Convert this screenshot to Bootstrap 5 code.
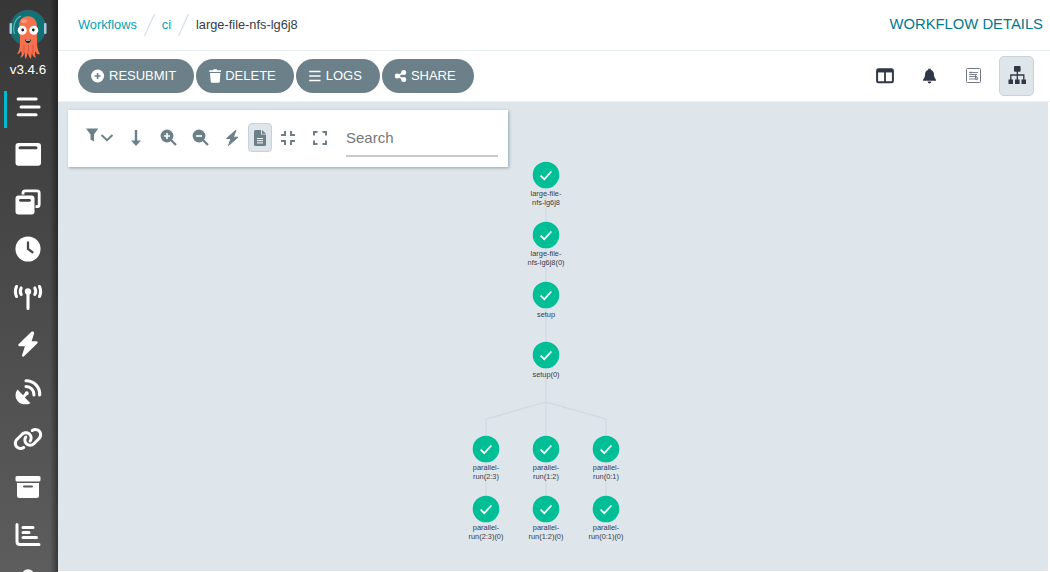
<!DOCTYPE html>
<html lang="en">
<head>
<meta charset="utf-8">
<meta name="viewport" content="width=device-width, initial-scale=1">
<title>Workflow Details</title>
<link href="https://cdn.jsdelivr.net/npm/bootstrap@5.3.0/dist/css/bootstrap.min.css" rel="stylesheet">
<style>
body{font-family:"Liberation Sans",Arial,sans-serif;font-size:13px;color:#363c4a;background:#fff}
a{text-decoration:none}
svg{display:block;flex:none}
.side{width:58px;background:linear-gradient(90deg,transparent 50px,rgba(0,0,0,.4)),linear-gradient(#373737,#5d5d5d);color:#fff}
.brand-box{height:83px;padding-top:9px}
.version{font-size:13.4px;line-height:16px;margin-top:2px;padding-right:2px}
.side-item{height:47.5px;flex:none;padding-right:2px}
.side-item.active::before{content:"";position:absolute;left:4px;top:8px;width:3px;height:37px;background:#00b9cd}
.crumbs{height:51px;border-bottom:1px solid #e9eff1;padding:0 7px 0 20px;font-size:12.8px}
.crumbs a{color:#00a2b3}
.page-title{font-size:14.8px;color:#007a8e;line-height:20px;margin-top:-3px}
.tools{height:51px;border-bottom:1px solid #edf2f4;padding:0 16px 0 20px}
.pill{height:34px;border-radius:17px;background:#6b8088;color:#fff;padding:0 18px 0 13px;font-size:13px}
.view-btn{width:35px;height:40px;border-radius:5px;border:1px solid transparent;color:#303746}
.view-btn.on{background:#dee6eb;border-color:#c6d3da}
.canvas{background:#dee6eb;margin:0 2px 1px 0}
.filter-box{left:10px;top:8px;width:440px;height:57px;background:#fff;box-shadow:1px 1px 3px #8fa4b1;padding:0 10px 0 17px}
.tool{flex:none;width:24px;height:29px;margin:-2px 8px 0 0;border:1px solid transparent;border-radius:4px;color:#6b8088}
.tool.wide{width:31px;margin-top:-5px}
.tool.tight{margin-right:4px}
.tool.on{background:#dee6eb;border-color:#c6d3da}
.search{width:152px;height:37px;margin:-1px 0 0 auto;border:0;border-bottom:2px solid #c9c9c9;border-radius:0;padding:0;font-size:15px;color:#777;background:none}
.search::placeholder{color:#777;opacity:1}
.graph{left:0;top:0}
.graph text{font-size:7.4px;text-anchor:middle;fill:#363c4a}
</style>
</head>
<body class="vh-100 overflow-hidden">
<svg width="0" height="0" class="position-absolute">
<symbol id="node" viewBox="-14 -14 28 28"><circle r="13.3" fill="#00be96"/><path d="M-5.4 .6-1.7 4.2 5.4-3.5" fill="none" stroke="#fff" stroke-width="1.7"/></symbol>
</svg>
<div class="d-flex h-100">
<nav class="side d-flex flex-column flex-shrink-0 overflow-hidden h-100">
  <div class="brand-box d-flex flex-column align-items-center flex-shrink-0">
    <svg width="38" height="51" viewBox="0 0 38 51" style="margin-right:2px"><circle cx="19" cy="19" r="17.7" fill="#0d7377" stroke="#39606c" stroke-width="1"/><rect x=".5" y="14" width="2.500" height="11" rx="1" fill="#a9c9dc"/><rect x="35" y="14" width="2.500" height="11" rx="1" fill="#a9c9dc"/><path d="M5.500 25C3 16 7 9 12 7" fill="none" stroke="#6fb5ad" stroke-width="1.200"/><path d="M10 17c0-13 18-13 18 0v14c0 7 1 11 3 14-3 1-4-1-5-3 0 3 0 5 1 7-3-1-4-3-4-6l-1 7c-2-2-3-4-3-7l-2 7c-2-2-1-5-1-7-1 3-2 5-5 6 2-3 2-5 1-7-1 2-2 3-4 3 3-4 3-9 3-15z" fill="#f5704c"/><path d="M15 36v8M19.500 36v7M24 36v8" stroke="#d9573c" stroke-width="1"/><ellipse cx="15" cy="12" rx="3" ry="2" fill="#fa987b"/><circle cx="13.200" cy="21.300" r="4.500" fill="#fff"/><circle cx="24.800" cy="21.300" r="4.500" fill="#fff"/><circle cx="13.700" cy="21" r="1.400" fill="#222"/><circle cx="24.300" cy="21" r="1.400" fill="#222"/><path d="M16 30.500q3 1.500 6 0-.6 3.500-3 3.500t-3-3.500" fill="#19222a"/><path d="M17 31.200q2 .7 4 0v.8h-4z" fill="#fff"/></svg>
    <div class="version">v3.4.6</div>
  </div>
  <a class="side-item active position-relative d-flex align-items-center justify-content-center"><svg width="32" height="32" viewBox="-16 -16 32 32" fill="none" stroke="#fff" stroke-width="3" stroke-linecap="round"><path d="M-10.500-8H7.500M-7.500 0h18M-10.500 7.800h18" transform="translate(.6)"/></svg></a>
  <a class="side-item d-flex align-items-center justify-content-center"><svg width="32" height="32" viewBox="-16 -16 32 32"><rect x="-12.500" y="-11" width="25.500" height="22.800" rx="3" fill="#fff"/><path d="M-8-6.300H8" stroke="#434343" stroke-width="3" stroke-linecap="round"/></svg></a>
  <a class="side-item d-flex align-items-center justify-content-center"><svg width="32" height="32" viewBox="-16 -16 32 32"><path d="M-5-7.500V-9q0-2.200 2.200-2.200H9q2.200 0 2.200 2.200V2.500q0 2.200-2.200 2.200H7.500" fill="none" stroke="#fff" stroke-width="2.800"/><rect x="-12.500" y="-6.500" width="19" height="19" rx="3" fill="#fff"/><path d="M-7.500-1.700H1.500" stroke="#454545" stroke-width="2.800" stroke-linecap="round"/></svg></a>
  <a class="side-item d-flex align-items-center justify-content-center"><svg width="32" height="32" viewBox="-16 -16 32 32"><circle r="12.600" fill="#fff"/><path d="M0-6.500V0L4.500 3.200" fill="none" stroke="#484848" stroke-width="2.300" stroke-linecap="round"/></svg></a>
  <a class="side-item d-flex align-items-center justify-content-center"><svg width="32" height="32" viewBox="-16 -16 32 32" fill="none" stroke="#fff" stroke-width="3.100" stroke-linecap="round"><path d="M0-5V11.500M-6.800-9q-2 3.500 0 6.500M6.800-9q2 3.500 0 6.500M-11.500-10.500q-2.200 5 0 10M11.500-10.500q2.200 5 0 10"/><circle cy="-5.500" r="1.700" fill="#fff"/></svg></a>
  <a class="side-item d-flex align-items-center justify-content-center"><svg width="32" height="32" viewBox="-16 -16 32 32"><path d="M4-11.200-8.600 1H-1.500L-4.800 11.500 8.600-1.500H2L5-11.200Z" fill="#fff" stroke="#fff" stroke-width="2.400" stroke-linejoin="round"/></svg></a>
  <a class="side-item d-flex align-items-center justify-content-center"><svg width="32" height="32" viewBox="-16 -16 32 32"><path d="M-10.500-2.500C-16 5-9 16 2.500 11.200L-3.200 5.500-1 3.300A2 2 0 1 0-3.200 1L-5 3.200Z" fill="#fff"/><path d="M-2-11.300A13.500 13.500 0 0 1 11.700 3M-2-5.500A8 8 0 0 1 6 3" stroke="#fff" stroke-width="3.100" stroke-linecap="round" fill="none"/></svg></a>
  <a class="side-item d-flex align-items-center justify-content-center"><svg width="30" height="30" viewBox="0 0 640 512"><path fill="#fff" d="M579.800 267.700c56.500-56.500 56.500-148 0-204.500c-50-50-128.800-56.500-186.300-15.400l-1.600 1.100c-14.400 10.300-17.700 30.300-7.400 44.600s30.300 17.700 44.600 7.400l1.600-1.100c32.100-22.900 76-19.300 103.800 8.600c31.500 31.500 31.500 82.500 0 114L422.300 334.800c-31.500 31.500-82.500 31.500-114 0c-27.900-27.900-31.500-71.800-8.600-103.800l1.100-1.600c10.300-14.400 6.900-34.400-7.400-44.600s-34.400-6.900-44.600 7.400l-1.100 1.600C206.500 251.200 213 330 263 380c56.500 56.500 148 56.500 204.500 0L579.800 267.700zM60.200 244.300c-56.500 56.500-56.500 148 0 204.500c50 50 128.800 56.500 186.300 15.400l1.600-1.100c14.400-10.300 17.700-30.300 7.400-44.600s-30.300-17.700-44.600-7.400l-1.600 1.100c-32.100 22.900-76 19.300-103.800-8.600C74 372 74 321 105.500 289.500L217.700 177.200c31.500-31.500 82.500-31.500 114 0c27.900 27.900 31.500 71.800 8.600 103.900l-1.100 1.600c-10.300 14.400-6.900 34.400 7.400 44.600s34.400 6.900 44.600-7.400l1.100-1.600C433.500 260.800 427 182 377 132c-56.500-56.500-148-56.500-204.500 0L60.200 244.300z"/></svg></a>
  <a class="side-item d-flex align-items-center justify-content-center"><svg width="32" height="32" viewBox="-16 -16 32 32"><rect x="-12.500" y="-11" width="25" height="5.500" rx="1.500" fill="#fff"/><path d="M-11-4H11V8.500Q11 11 8.500 11H-8.500Q-11 11-11 8.500Z" fill="#fff"/><path d="M-4-.5H4" stroke="#585858" stroke-width="2" stroke-linecap="round"/></svg></a>
  <a class="side-item d-flex align-items-center justify-content-center"><svg width="32" height="32" viewBox="-16 -16 32 32" fill="none" stroke="#fff" stroke-width="3" stroke-linecap="round"><path d="M-11-9.500V7.500Q-11 10.500-8 10.500H11M-5-6.500H5M-5-1.600H1M-5 3.600H8.500"/></svg></a>
  <a class="side-item d-flex align-items-center justify-content-center"><svg width="32" height="32" viewBox="-16 -16 32 32"><circle cy="-6.500" r="6.200" fill="#fff"/><path d="M-11 11Q-11 2-4 2H4Q11 2 11 11Z" fill="#fff"/></svg></a>
</nav>
<main class="flex-grow-1 d-flex flex-column">
  <header class="crumbs d-flex align-items-center justify-content-between flex-shrink-0">
    <div class="d-flex align-items-center">
      <a href="#">Workflows</a>
      <svg width="25" height="24" viewBox="0 0 25 24"><path d="M7.500 23 17.500 1" stroke="#d8e1e7" stroke-width="1.300"/></svg>
      <a href="#">ci</a>
      <svg width="25" height="24" viewBox="0 0 25 24"><path d="M7.500 23 17.500 1" stroke="#d8e1e7" stroke-width="1.300"/></svg>
      <span>large-file-nfs-lg6j8</span>
    </div>
    <div class="page-title">WORKFLOW DETAILS</div>
  </header>
  <div class="tools d-flex align-items-center justify-content-between flex-shrink-0">
    <div class="d-flex" style="gap:2px">
      <button class="pill border-0 d-flex align-items-center"><svg width="18" height="14" viewBox="0 0 18 14"><circle cx="6.600" cy="7" r="6.500" fill="#fff"/><path d="M3.600 7h6M6.600 4v6" stroke="#6b8088" stroke-width="1.600"/></svg>RESUBMIT</button>
      <button class="pill border-0 d-flex align-items-center"><svg width="16" height="14" viewBox="0 0 16 14"><path d="M.3 1.300H4L4.800.3H7.700L8.500 1.300H12V3H.3ZM1 4H11.400L10.800 12.500Q10.700 13.700 9.500 13.700H3Q1.800 13.700 1.700 12.500Z" fill="#fff"/></svg>DELETE</button>
      <button class="pill border-0 d-flex align-items-center"><svg width="17" height="14" viewBox="0 0 17 14"><path d="M.2 2.500H11.500M.2 7H11.500M.2 11.500H11.500" stroke="#fff" stroke-width="1.600"/></svg>LOGS</button>
      <button class="pill border-0 d-flex align-items-center"><svg width="16" height="14" viewBox="0 0 16 14"><path d="M9 3.500 2.500 7 9 10.500" fill="none" stroke="#fff" stroke-width="1.600"/><circle cx="8.700" cy="3.500" r="2.500" fill="#fff"/><circle cx="2.300" cy="7" r="2.500" fill="#fff"/><circle cx="8.700" cy="10.500" r="2.500" fill="#fff"/></svg>SHARE</button>
    </div>
    <div class="d-flex" style="gap:9px">
      <a class="view-btn d-flex align-items-center justify-content-center"><svg width="18" height="16" viewBox="0 0 18 16"><rect x="1.100" y="1.300" width="15.800" height="13" rx="1.500" fill="none" stroke="currentColor" stroke-width="2"/><path d="M1 3.200H17" stroke="currentColor" stroke-width="2.500"/><path d="M9 3V14" stroke="currentColor" stroke-width="1.800"/></svg></a>
      <a class="view-btn d-flex align-items-center justify-content-center"><svg width="16" height="16" viewBox="0 0 16 16"><path d="M7.200 2V.8H9.800V2Q13 2.800 13 7C13 10 15 11 15 12V12.800H2V12C2 11 4 10 4 7Q4 2.800 7.200 2ZM6.500 13.600H10.500Q10 15.500 8.500 15.500T6.500 13.600" fill="currentColor"/></svg></a>
      <a class="view-btn d-flex align-items-center justify-content-center"><svg width="16" height="16" viewBox="0 0 16 16" fill="none" stroke="#727883"><rect x="1.500" y=".5" width="14" height="14" rx="1"/><path d="M4 4.500H13M4 6.500H12M4 8.500H12M4 11H13M6 3.500V5.500M10.500 7V10" stroke-width=".9"/><circle cx="11.500" cy="10.500" r="1.200" stroke-width=".9"/></svg></a>
      <a class="view-btn on d-flex align-items-center justify-content-center"><svg width="18" height="20" viewBox="0 0 18 20"><rect x="6" y="0" width="6.600" height="5.800" rx="1" fill="currentColor"/><path d="M9.300 5V14M2.800 14V9H15.800V14" fill="none" stroke="currentColor" stroke-width="1.300"/><path d="M.5 13.500H5V18H.5ZM7 13.500H11.600V18H7ZM13.500 13.500H18V18H13.500Z" fill="currentColor"/></svg></a>
    </div>
  </div>
  <section class="canvas position-relative flex-grow-1 overflow-hidden">
    <svg class="graph position-absolute" width="990" height="469" viewBox="58 102 990 469">
      <path d="M546 175V509M546 402 486 419V509M546 402 606 419V509" fill="none" stroke="#cfdce2" stroke-width="1.300"/>
      <use href="#node" x="532" y="161" width="28" height="28"/><text x="546" y="196">large-file-</text><text x="546" y="205">nfs-lg6j8</text>
      <use href="#node" x="532" y="221" width="28" height="28"/><text x="546" y="256">large-file-</text><text x="546" y="265">nfs-lg6j8(0)</text>
      <use href="#node" x="532" y="281" width="28" height="28"/><text x="546" y="317">setup</text>
      <use href="#node" x="532" y="341" width="28" height="28"/><text x="546" y="377">setup(0)</text>
      <use href="#node" x="472" y="435" width="28" height="28"/><text x="486" y="470">parallel-</text><text x="486" y="479">run(2:3)</text>
      <use href="#node" x="532" y="435" width="28" height="28"/><text x="546" y="470">parallel-</text><text x="546" y="479">run(1:2)</text>
      <use href="#node" x="592" y="435" width="28" height="28"/><text x="606" y="470">parallel-</text><text x="606" y="479">run(0:1)</text>
      <use href="#node" x="472" y="495" width="28" height="28"/><text x="486" y="530">parallel-</text><text x="486" y="539">run(2:3)(0)</text>
      <use href="#node" x="532" y="495" width="28" height="28"/><text x="546" y="530">parallel-</text><text x="546" y="539">run(1:2)(0)</text>
      <use href="#node" x="592" y="495" width="28" height="28"/><text x="606" y="530">parallel-</text><text x="606" y="539">run(0:1)(0)</text>
    </svg>
    <div class="filter-box position-absolute d-flex align-items-center">
      <a class="tool wide d-flex align-items-center"><svg width="29" height="18" viewBox="0 0 29 18"><path d="M0 1.500H12.300L8 7.500V14.500L4.500 12.500V7.500Z" fill="currentColor"/><path d="M15.500 8 21 13.300 26.500 8" fill="none" stroke="currentColor" stroke-width="1.900"/></svg></a>
      <a class="tool d-flex align-items-center justify-content-center"><svg width="12" height="18" viewBox="0 0 12 18"><path d="M4.800 1H7.200V11.500H11L6 17 1 11.500H4.800Z" fill="currentColor"/></svg></a>
      <a class="tool d-flex align-items-center justify-content-center"><svg width="17" height="17" viewBox="0 0 17 17"><circle cx="7" cy="7" r="6.400" fill="currentColor"/><path d="m11 11 5 5" stroke="currentColor" stroke-width="2.200"/><path d="M4 7H10M7 4V10" stroke="#fff" stroke-width="1.600"/></svg></a>
      <a class="tool d-flex align-items-center justify-content-center"><svg width="17" height="17" viewBox="0 0 17 17"><circle cx="7" cy="7" r="6.400" fill="currentColor"/><path d="m11 11 5 5" stroke="currentColor" stroke-width="2.200"/><path d="M4 7H10" stroke="#fff" stroke-width="1.600"/></svg></a>
      <a class="tool tight d-flex align-items-center justify-content-center"><svg width="14" height="18" viewBox="0 0 14 18"><path d="M10.500 1.500 1.500 9.500H6L3.500 16.500 13 8.200H8.300L11 1.500Z" fill="currentColor" stroke="currentColor" stroke-width="1" stroke-linejoin="round"/></svg></a>
      <a class="tool tight on d-flex align-items-center justify-content-center"><svg width="12" height="16" viewBox="0 0 12 16"><path d="M1.500 0H7V4.500H12V14.500Q12 16 10.500 16H1.500Q0 16 0 14.500V1.500Q0 0 1.500 0M8 0 12 3.800H8Z" fill="currentColor"/><path d="M3 8.500H9M3 10.700H9M3 12.900H9" stroke="#fff"/></svg></a>
      <a class="tool d-flex align-items-center justify-content-center"><svg width="14" height="14" viewBox="0 0 14 14" fill="none" stroke="currentColor" stroke-width="2"><path d="M0 4H4V0M10 0V4H14M14 10H10V14M4 14V10H0"/></svg></a>
      <a class="tool d-flex align-items-center justify-content-center"><svg width="14" height="14" viewBox="0 0 14 14" fill="none" stroke="currentColor" stroke-width="2"><path d="M1 4.500V1H4.500M9.500 1H13V4.500M13 9.500V13H9.500M4.500 13H1V9.500"/></svg></a>
      <input class="search shadow-none" type="text" placeholder="Search" aria-label="Search">
    </div>
  </section>
</main>
</div>
<script src="https://cdn.jsdelivr.net/npm/bootstrap@5.3.0/dist/js/bootstrap.bundle.min.js"></script>
</body>
</html>
